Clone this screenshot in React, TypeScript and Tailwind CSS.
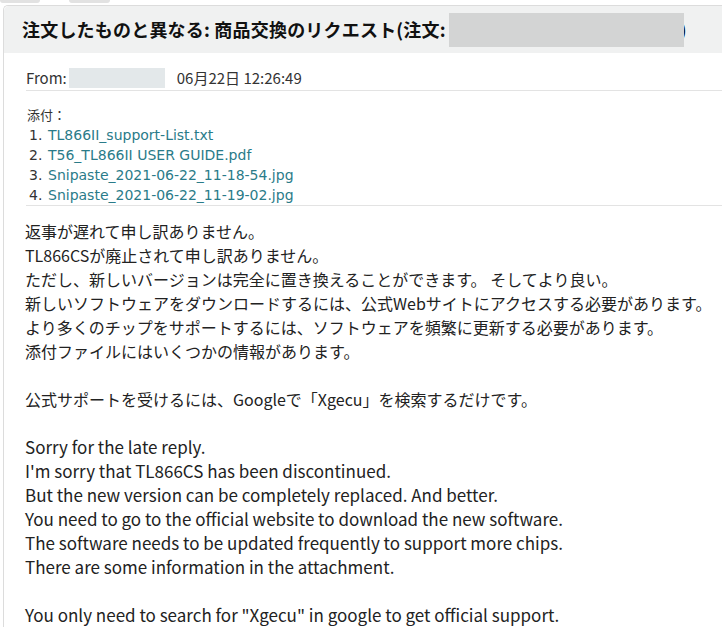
import React from 'react'

const attachments = [
  "TL866II_support-List.txt",
  "T56_TL866II USER GUIDE.pdf",
  "Snipaste_2021-06-22_11-18-54.jpg",
  "Snipaste_2021-06-22_11-19-02.jpg",
]

const jaLines = [
  "返事が遅れて申し訳ありません。",
  "TL866CSが廃止されて申し訳ありません。",
  "ただし、新しいバージョンは完全に置き換えることができます。 そしてより良い。",
  "新しいソフトウェアをダウンロードするには、公式Webサイトにアクセスする必要があります。",
  "より多くのチップをサポートするには、ソフトウェアを頻繁に更新する必要があります。",
  "添付ファイルにはいくつかの情報があります。",
]

const enLines = [
  "Sorry for the late reply.",
  "I'm sorry that TL866CS has been discontinued.",
  "But the new version can be completely replaced. And better.",
  "You need to go to the official website to download the new software.",
  "The software needs to be updated frequently to support more chips.",
  "There are some information in the attachment.",
]

export default function App() {
  return (
    <div className="w-[722px] h-[635px] overflow-hidden bg-white text-[#222] font-['Noto_Sans_CJK_JP',sans-serif]">
      {/* tabs peeking from above */}
      <div className="flex h-[5px]">
        <div className="w-[40px] h-[3px] bg-[#e2e2e2] rounded-b-[3px]" />
        <div className="ml-[29px] w-[41px] h-[3px] bg-[#e2e2e2] rounded-b-[3px]" />
      </div>

      <div className="ml-[3px] border-l border-t border-[#dcdcdc] rounded-tl-[5px]">
        <div className="h-[47px] bg-[#f0f1f1] flex items-center pl-[18px] rounded-tl-[5px]">
          <h1 className="text-[18px] font-bold text-[#111] tracking-[0.2px] whitespace-nowrap">
            注文したものと異なる: 商品交換のリクエスト(注文:
          </h1>
          <div className="relative z-[1] ml-[3px] w-[235px] h-[34px] bg-[#d3d4d4]" />
          <span className="text-[18px] font-bold text-[#111] -ml-[4px]">)</span>
        </div>

        <div className="pl-[22px]">
          <div className="h-[38px] pt-[14px] pb-[1px] flex items-center border-b border-[#e3e3e3] text-[15px] text-[#333]">
            <span>From:</span>
            <div className="ml-[2px] w-[96px] h-[20px] bg-[#e3e8ea]" />
            <span className="ml-[12px]">06月22日 12:26:49</span>
          </div>

          <div className="pt-[14px] border-b border-[#e3e3e3]">
            <div className="h-[20px] text-[13px] text-[#333] leading-[20px] pl-[1px]">添付：</div>
            <ol>
              {attachments.map((a, i) => (
                <li key={a} className="h-[20px] leading-[20px] text-[14px] flex font-['DejaVu_Sans',sans-serif]">
                  <span className="w-[22px] pl-[3px] text-[#333]">{i + 1}.</span>
                  <span className="text-[#2a7b89]">{a}</span>
                </li>
              ))}
            </ol>
          </div>

          <div className="pt-[13px] leading-[24px] text-[#222] -ml-[1px]">
            <div className="text-[16px]">
              {jaLines.map((l) => (
                <div key={l}>{l}</div>
              ))}
              <div className="h-[24px]" />
              <div>公式サポートを受けるには、Googleで「Xgecu」を検索するだけです。</div>
              <div className="h-[24px]" />
            </div>
            <div className="text-[17px]">
              {enLines.map((l) => (
                <div key={l}>{l}</div>
              ))}
              <div className="h-[24px]" />
              <div>You only need to search for "Xgecu" in google to get official support.</div>
            </div>
          </div>
        </div>
      </div>
    </div>
  )
}
